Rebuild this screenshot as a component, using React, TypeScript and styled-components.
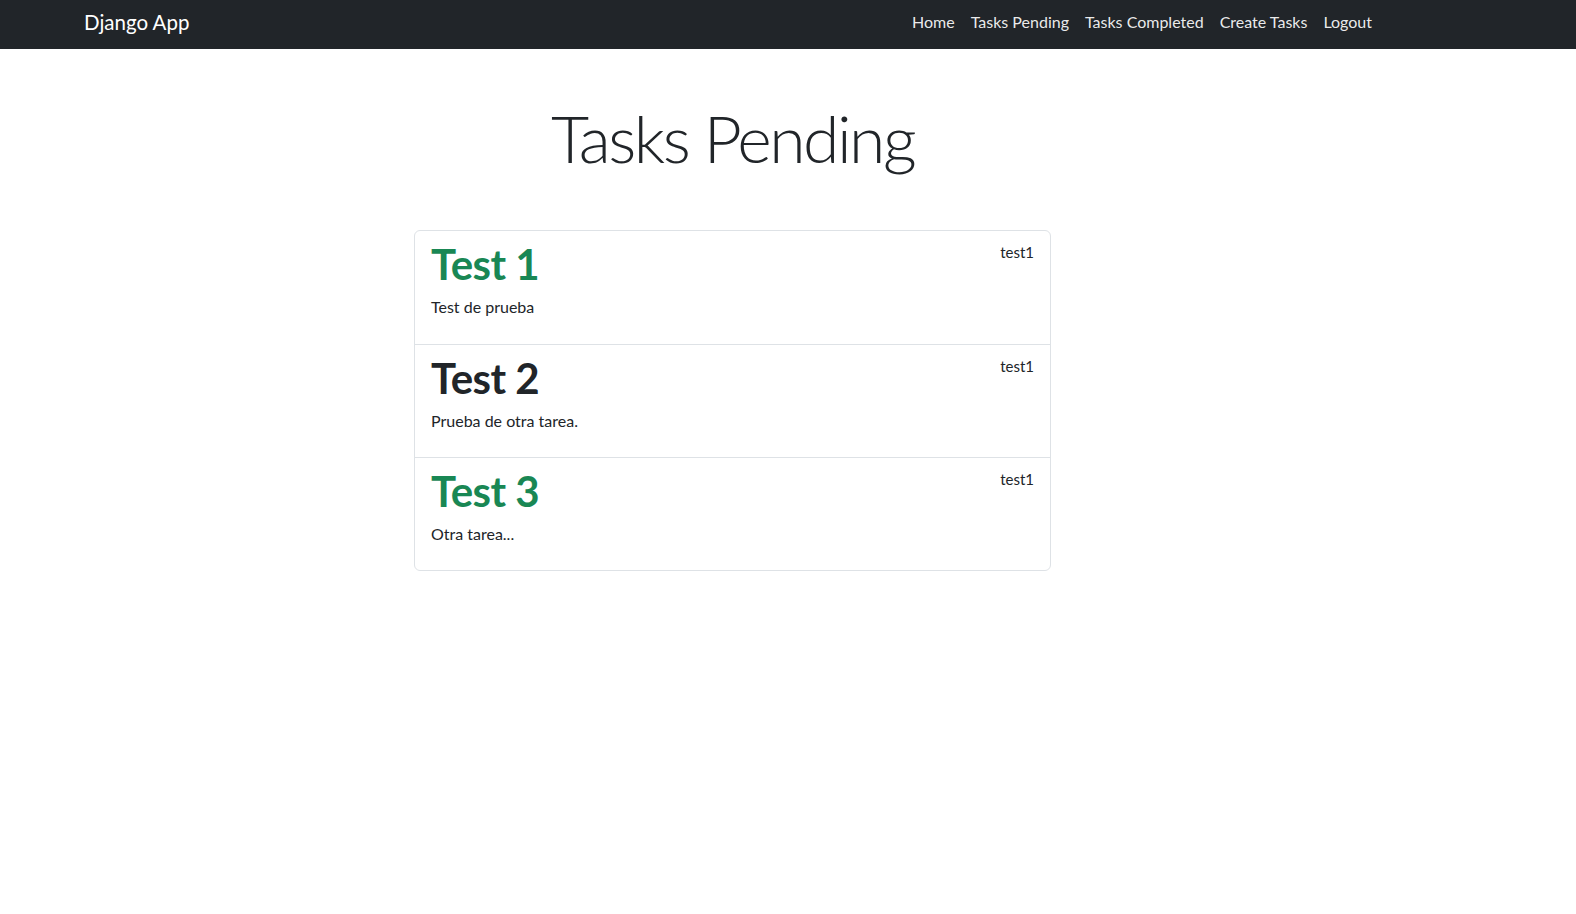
import styled, { createGlobalStyle } from "styled-components";

const GlobalStyle = createGlobalStyle`
  * { box-sizing: border-box; }
  body {
    margin: 0;
    font-family: Lato, "Open Sans", sans-serif;
    color: #212529;
    background: #fff;
  }
`;

const Navbar = styled.nav`
  background-color: #212529;
  height: 49px;
`;

const NavContainer = styled.div`
  width: 1320px;
  margin-left: 72px;
  padding: 0 12px;
  height: 100%;
  display: flex;
  align-items: center;
  justify-content: space-between;
`;

const Brand = styled.a`
  color: #fff;
  font-size: 20.5px;
  text-decoration: none;
  padding-bottom: 6px;
`;

const NavList = styled.ul`
  list-style: none;
  margin: 0;
  padding: 0;
  display: flex;
`;

const NavLink = styled.a`
  display: block;
  padding: 0 8px 7px;
  color: rgba(255, 255, 255, 0.92);
  font-size: 16px;
  text-decoration: none;
`;

const Main = styled.main`
  width: 1313px;
  margin-left: 76px;
  display: flex;
  flex-direction: column;
  align-items: center;
`;

const Title = styled.h1`
  font-size: 66px;
  font-weight: 300;
  letter-spacing: -2.5px;
  margin: 49px 0 53px;
  line-height: 1.2;
`;

const TaskList = styled.ul`
  list-style: none;
  margin: 0;
  padding: 0;
  width: 637px;
  border: 1px solid #dee2e6;
  border-radius: 6px;
`;

const TaskItem = styled.li`
  padding: 8px 16px;
  height: 113px;
  & + & {
    border-top: 1px solid #dee2e6;
  }
`;

const TaskHeader = styled.div`
  display: flex;
  justify-content: space-between;
  align-items: flex-start;
`;

const TaskTitle = styled.h2<{ $done?: boolean }>`
  margin: 0 0 3px;
  font-size: 42px;
  font-weight: 700;
  letter-spacing: -0.5px;
  line-height: 1.2;
  color: ${(p) => (p.$done ? "#212529" : "#198754")};
`;

const TaskUser = styled.small`
  font-size: 15px;
  margin-top: 4px;
`;

const TaskDesc = styled.p`
  margin: 4px 0 0;
  font-size: 16px;
`;

const tasks = [
  { id: 1, title: "Test 1", description: "Test de prueba", user: "test1", important: true },
  { id: 2, title: "Test 2", description: "Prueba de otra tarea.", user: "test1", important: false },
  { id: 3, title: "Test 3", description: "Otra tarea...", user: "test1", important: true },
];

export default function App() {
  return (
    <>
      <GlobalStyle />
      <Navbar>
        <NavContainer>
          <Brand href="#">Django App</Brand>
          <NavList>
            <li><NavLink href="#">Home</NavLink></li>
            <li><NavLink href="#">Tasks Pending</NavLink></li>
            <li><NavLink href="#">Tasks Completed</NavLink></li>
            <li><NavLink href="#">Create Tasks</NavLink></li>
            <li><NavLink href="#">Logout</NavLink></li>
          </NavList>
        </NavContainer>
      </Navbar>
      <Main>
        <Title>Tasks Pending</Title>
        <TaskList>
          {tasks.map((t) => (
            <TaskItem key={t.id}>
              <TaskHeader>
                <TaskTitle $done={!t.important}>{t.title}</TaskTitle>
                <TaskUser>{t.user}</TaskUser>
              </TaskHeader>
              <TaskDesc>{t.description}</TaskDesc>
            </TaskItem>
          ))}
        </TaskList>
      </Main>
    </>
  );
}
